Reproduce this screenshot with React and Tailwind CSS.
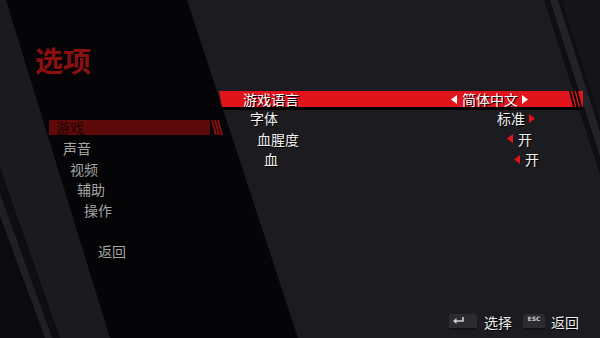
import React from "react";

const font = "font-['Noto_Sans_CJK_SC','Noto_Sans',sans-serif]";
const shadow = "[text-shadow:1px_1px_0_#000]";

const menu = [
  { label: "游戏", active: true },
  { label: "声音" },
  { label: "视频" },
  { label: "辅助" },
  { label: "操作" },
  { label: "" },
  { label: "返回" },
];

const rows = [
  { label: "字体", value: "标准", left: false, right: true },
  { label: "血腥度", value: "开", left: true, right: false },
  { label: "血", value: "开", left: true, right: false },
];

const rowPad = [
  "pl-[31px] pr-[48px]",
  "pl-[38px] pr-[41px]",
  "pl-[45px] pr-[34px]",
];

const menuPad = [
  "pl-[7px]",
  "pl-[14px]",
  "pl-[21px]",
  "pl-[28px]",
  "pl-[35px]",
  "pl-[42px]",
  "pl-[49px]",
];

const Arrow = ({ dir, color, show }) => (
  <svg
    width="6"
    height="9"
    viewBox="0 0 6 9"
    className={show ? "block" : "invisible"}
  >
    {dir === "left" ? (
      <polygon points="6,0 6,9 0,4.5" fill={color} />
    ) : (
      <polygon points="0,0 0,9 6,4.5" fill={color} />
    )}
  </svg>
);

const Value = ({ value, left, right, color }) => (
  <div className="ml-auto flex items-center">
    <Arrow dir="left" color={color} show={left} />
    <span className="ml-[5px]">{value}</span>
    <span className="ml-[4px]">
      <Arrow dir="right" color={color} show={right} />
    </span>
  </div>
);

const Background = () => (
  <svg
    className="absolute inset-0 h-full w-full"
    viewBox="0 0 600 338"
    preserveAspectRatio="none"
  >
    <rect width="600" height="338" fill="#1c1c20" />
    <polygon points="0,0 187,0 298,338 0,338" fill="#050507" />
    <polygon points="0,0 6,0 110,338 0,338" fill="#1b1b1f" />
    <polygon points="0,167 60,338 52,338 0,194" fill="#0e0e11" />
    <polygon points="0,194 52,338 45,338 0,216" fill="#202024" />
    <polygon points="0,216 45,338 0,338" fill="#0b0b0d" />
    <polygon points="544,0 550,0 606,175 600,175" fill="#0f0f12" />
    <polygon points="550,0 558,0 614,175 606,175" fill="#232327" />
    <polygon points="558,0 562,0 618,175 614,175" fill="#0f0f12" />
    <polygon points="562,0 600,0 600,119" fill="#151518" />
  </svg>
);

export default function App() {
  return (
    <div
      className={`relative flex h-[338px] w-[600px] flex-col overflow-hidden ${font}`}
    >
      <Background />

      <div className="relative flex flex-1">
        {/* left column */}
        <div className="w-[219px] shrink-0 pt-[43px]">
          <h1 className="pl-[35px] text-[28px] font-bold leading-[34px] text-[#8c1010]">
            选项
          </h1>
          <div className="mt-[40px] pl-[49px]">
            {menu.map((m, i) =>
              m.active ? (
                <div key={i} className="flex h-[20.7px] items-center">
                  <div
                    className={`flex h-[15px] w-[161px] shrink-0 items-center bg-[#5e0a0a] ${menuPad[0]} text-[14px] leading-[15px] text-[#220303]`}
                  >
                    {m.label}
                  </div>
                  <svg
                    className="shrink-0"
                    width="13"
                    height="15"
                    viewBox="0 0 13 15"
                  >
                    <polygon points="1,0 3,0 7,15 5,15" fill="#8a0f0f" />
                    <polygon points="4,0 6,0 10,15 8,15" fill="#8a0f0f" />
                    <polygon points="7,0 9,0 13,15 11,15" fill="#8a0f0f" />
                  </svg>
                </div>
              ) : (
                <div
                  key={i}
                  className={`flex h-[20.7px] items-center ${menuPad[i]} text-[14px] leading-[20px] text-[#a4a4a4] ${shadow}`}
                >
                  {m.label}
                </div>
              )
            )}
          </div>
        </div>

        {/* right column */}
        <div className="flex-1 pt-[91px]">
          <div className="w-[364px]">
            <div className="relative flex h-[16px] items-center bg-[#e1141c] pl-[24px] pr-[55px] text-[14px] leading-[16px] text-white [clip-path:polygon(0_0,100%_0,100%_100%,3px_100%)]">
              <span className={shadow}>游戏语言</span>
              <div className={`ml-auto flex items-center ${shadow}`}>
                <Value value="简体中文" left right color="#ffffff" />
              </div>
              <svg
                className="absolute right-0 top-0"
                width="16"
                height="16"
                viewBox="0 0 16 16"
              >
                <polygon points="2,0 4,0 8,16 6,16" fill="#000" />
                <polygon points="5.5,0 7.5,0 11.5,16 9.5,16" fill="#000" />
                <polygon points="9,0 11,0 15,16 13,16" fill="#000" />
              </svg>
            </div>
            <div className="ml-[3px] h-[3px] bg-black" />
          </div>

          <div className="-mt-[2px] w-[364px]">
            {rows.map((r, i) => (
              <div
                key={r.label}
                className={`flex h-[20.5px] items-center ${rowPad[i]} text-[14px] leading-[20px] text-[#f2f2f2]`}
              >
                <span className={shadow}>{r.label}</span>
                <div className={`ml-auto flex ${shadow}`}>
                  <Value
                    value={r.value}
                    left={r.left}
                    right={r.right}
                    color="#e1141c"
                  />
                </div>
              </div>
            ))}
          </div>
        </div>
      </div>

      {/* footer hints */}
      <div className="relative mb-[8px] flex h-[16px] items-center justify-end pr-[21px] text-[14px] leading-[16px] text-[#ececec]">
        <div className="flex h-[16px] w-[28px] items-center rounded-[2px] border-b-2 border-[#121214] bg-[#2c2c30] pl-[4px]">
          <svg width="11" height="8" viewBox="0 0 11 8">
            <polyline
              points="10,0 10,4 2,4"
              fill="none"
              stroke="#d0d0d0"
              strokeWidth="1.6"
            />
            <polygon points="0,4 3.5,1 3.5,7" fill="#d0d0d0" />
          </svg>
        </div>
        <span className={`ml-[7px] ${shadow}`}>选择</span>
        <div className="ml-[11px] flex h-[16px] w-[22px] justify-center rounded-[2px] border-b-2 border-[#121214] bg-[#2c2c30] pt-[1px] font-['DejaVu_Sans',sans-serif] text-[6px] font-bold leading-[7px] text-[#c8c8c8]">
          ESC
        </div>
        <span className={`ml-[6px] ${shadow}`}>返回</span>
      </div>
    </div>
  );
}
